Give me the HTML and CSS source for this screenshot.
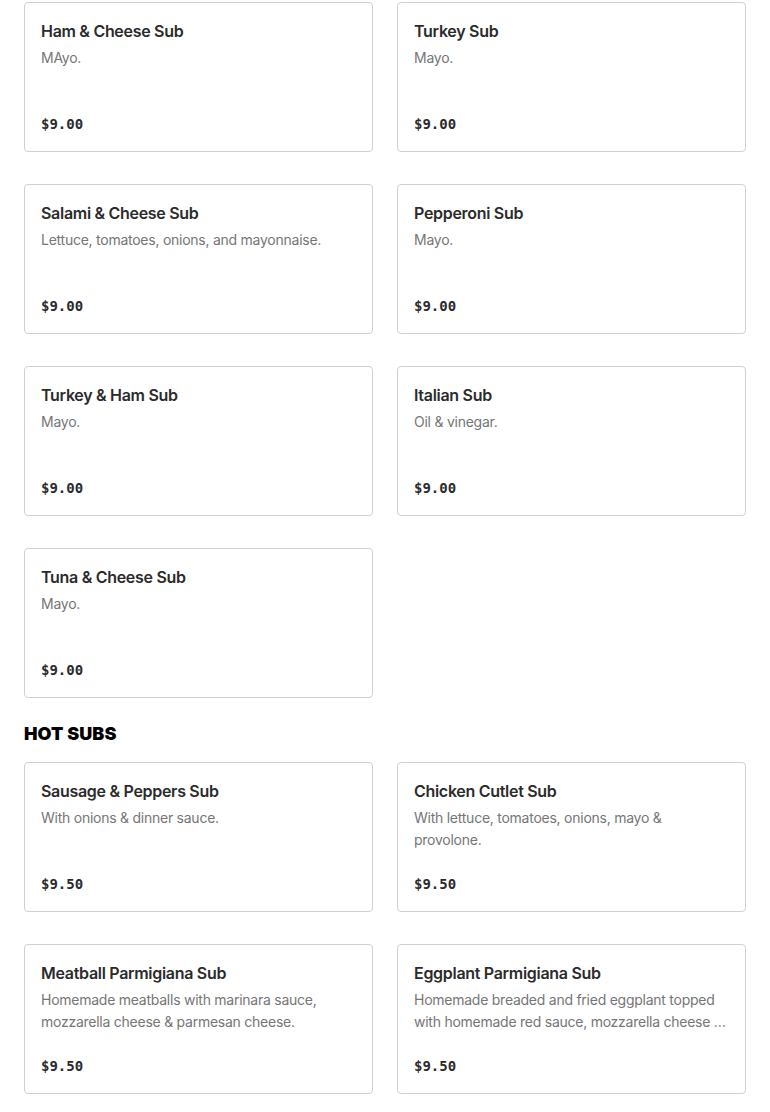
FILE: index.html
```html
<!DOCTYPE html>
<html>
<head>
<meta charset="utf-8">
<link rel="stylesheet" href="styles.css">
</head>
<body>
<main class="menu">
  <section class="grid">
    <div class="card"><div class="title">Ham &amp; Cheese Sub</div><div class="desc">MAyo.</div><div class="price">$9.00</div></div>
    <div class="card"><div class="title">Turkey Sub</div><div class="desc">Mayo.</div><div class="price">$9.00</div></div>
    <div class="card"><div class="title">Salami &amp; Cheese Sub</div><div class="desc">Lettuce, tomatoes, onions, and mayonnaise.</div><div class="price">$9.00</div></div>
    <div class="card"><div class="title">Pepperoni Sub</div><div class="desc">Mayo.</div><div class="price">$9.00</div></div>
    <div class="card"><div class="title">Turkey &amp; Ham Sub</div><div class="desc">Mayo.</div><div class="price">$9.00</div></div>
    <div class="card"><div class="title">Italian Sub</div><div class="desc">Oil &amp; vinegar.</div><div class="price">$9.00</div></div>
    <div class="card"><div class="title">Tuna &amp; Cheese Sub</div><div class="desc">Mayo.</div><div class="price">$9.00</div></div>
  </section>
  <h2 class="section-title">HOT SUBS</h2>
  <section class="grid">
    <div class="card"><div class="title">Sausage &amp; Peppers Sub</div><div class="desc">With onions &amp; dinner sauce.</div><div class="price">$9.50</div></div>
    <div class="card"><div class="title">Chicken Cutlet Sub</div><div class="desc">With lettuce, tomatoes, onions, mayo &amp; provolone.</div><div class="price">$9.50</div></div>
    <div class="card"><div class="title">Meatball Parmigiana Sub</div><div class="desc">Homemade meatballs with marinara sauce, mozzarella cheese &amp; parmesan cheese.</div><div class="price">$9.50</div></div>
    <div class="card"><div class="title">Eggplant Parmigiana Sub</div><div class="desc">Homemade breaded and fried eggplant topped with homemade red sauce, mozzarella cheese &amp; parmesan cheese.</div><div class="price">$9.50</div></div>
  </section>
</main>
</body>
</html>
```

FILE: styles.css
```css
html, body {
  margin: 0;
  padding: 0;
  background: #fff;
}
.menu {
  padding: 2px 24px 0;
  font-family: "Inter", "Liberation Sans", sans-serif;
  color: #2d2d2d;
}
.grid {
  display: grid;
  grid-template-columns: 1fr 1fr;
  column-gap: 24px;
  row-gap: 32px;
}
.card {
  box-sizing: border-box;
  height: 150px;
  border: 1px solid #d0d0d0;
  border-radius: 4px;
  padding: 16px;
  display: flex;
  flex-direction: column;
}
.title {
  font-size: 16px;
  line-height: 24px;
  font-weight: 600;
  letter-spacing: -0.3px;
  color: #2b2b2b;
}
.desc {
  margin-top: 4px;
  font-size: 14px;
  line-height: 22px;
  letter-spacing: -0.25px;
  color: #767676;
  display: -webkit-box;
  -webkit-line-clamp: 2;
  -webkit-box-orient: vertical;
  overflow: hidden;
}
.price {
  margin-top: auto;
  margin-bottom: 1px;
  font-family: "DejaVu Sans Mono", "Liberation Mono", monospace;
  font-weight: 700;
  font-size: 14px;
  line-height: 20px;
  color: #2b2b2b;
}
.section-title {
  margin: 24px 0 16px;
  font-size: 18px;
  line-height: 24px;
  font-weight: 900;
  color: #000;
  letter-spacing: 0.1px;
}
```
